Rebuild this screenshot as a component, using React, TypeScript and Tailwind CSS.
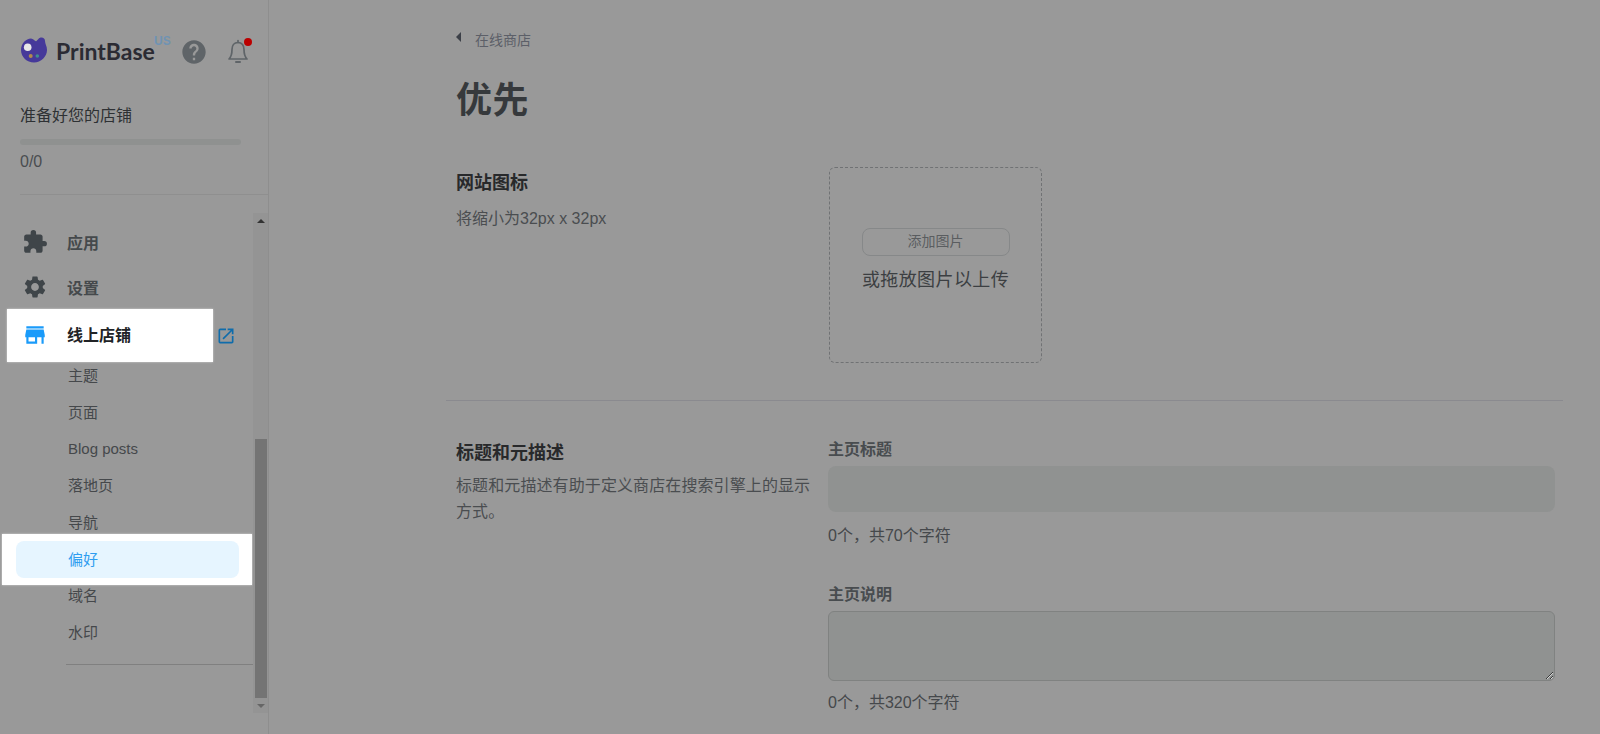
import React from "react";
import { MdExtension, MdSettings, MdStore, MdOpenInNew, MdHelp } from "react-icons/md";

function Logo() {
  return (
    <svg width="28" height="26" viewBox="0 0 28 26" className="shrink-0">
      <path d="M11 1.500C6 1.500 1 6.500 1 13C1 20 7 25.500 14 25.500C21 25.500 27 19.500 27 13C27 9 25 7 25 4C25 2 23.500 .5 21.500 .5C18.500 .5 18 3 16.500 4C15 5 13.500 1.500 11 1.500Z" fill="#46399a" />
      <circle cx="7.700" cy="10.300" r="3.800" fill="#e8e8e8" />
      <circle cx="10.700" cy="19" r="2" fill="#b08a4e" />
      <circle cx="17.300" cy="19" r="1.800" fill="#3f8f8f" />
    </svg>
  );
}

function BellIcon() {
  return (
    <svg width="22" height="26" viewBox="0 0 22 26" fill="none" stroke="#5f6468" strokeWidth="1.700" strokeLinecap="round" strokeLinejoin="round">
      <path d="M11 3.500C7 3.500 5 6.500 5 10.500C5 15 4.500 17.500 2 20H20C17.500 17.500 17 15 17 10.500C17 6.500 15 3.500 11 3.500Z" />
      <path d="M11 1.500V3.500" />
      <path d="M9 23H13" strokeWidth="2" />
    </svg>
  );
}

function SubItem({ children }: { children: React.ReactNode }) {
  return <div className="h-[36.700px] pl-[68px] flex items-center text-[15px] text-[#45484b]">{children}</div>;
}

function App() {
  return (
    <div className="flex h-[734px] w-[1600px] overflow-hidden bg-[#999999] font-['Liberation_Sans','Noto_Sans_CJK_SC',sans-serif] text-[#3a3d40]">
      <aside className="w-[269px] shrink-0 border-r border-[#8e8e8e] flex flex-col">
        <div className="h-[102px] pl-[20px] pt-[37px] flex items-start">
          <Logo />
          <span className="ml-[8px] w-[98px] text-[23px] leading-[28px] font-bold text-[#2b2b33] font-['Lato',sans-serif]">PrintBase</span>
          <span className="w-[18px] mt-[-3px] text-[12px] leading-[14px] font-bold text-[#6f93b3]">US</span>
          <MdHelp className="ml-[8px] mt-[1px] text-[#5f6468]" size={28} />
          <div className="relative ml-[19px] mt-[2px]">
            <BellIcon />
            <span className="absolute right-[-3px] top-[-1px] w-[8px] h-[8px] rounded-full bg-[#bb0000]" />
          </div>
        </div>
        <div className="mx-[20px] text-[16px] leading-[28px] text-[#2e3134]">准备好您的店铺</div>
        <div className="ml-[20px] mt-[9px] w-[221px] h-[6px] rounded-full bg-[#8f9190]" />
        <div className="ml-[20px] mt-[7px] text-[16px] leading-[20px] text-[#4a4d50]">0/0</div>
        <div className="ml-[20px] mt-[22px] border-t border-[#8f8f8f]" />
        <div className="mt-[18px] h-[500px] flex">
          <nav className="w-[253px] shrink-0 pt-[8px]">
            <div className="h-[45.500px] flex items-center pl-[22px] gap-[19px] text-[16px] font-bold text-[#45494c]">
              <MdExtension size={26} className="text-[#3f4549] mt-[-4px]" />
              <span>应用</span>
            </div>
            <div className="h-[45.500px] flex items-center pl-[22px] gap-[19px] text-[16px] font-bold text-[#45494c]">
              <MdSettings size={26} className="text-[#3f4549] mt-[-4px]" />
              <span>设置</span>
            </div>
            <div className="flex items-center h-[53px] mt-[-3px]">
              <div className="ml-[7px] w-[206px] h-[53px] bg-white shadow-[0_0_2px_0_rgba(255,255,255,0.6)] flex items-center pl-[15px] gap-[19px] text-[16px] font-bold text-[#212326]">
                <MdStore size={26} className="text-[#1a9bfa] mt-[-2px]" />
                <span>线上店铺</span>
              </div>
              <MdOpenInNew size={20} className="ml-[3px] text-[#0f6cab]" />
            </div>
            <div className="mt-[-4px]">
              <SubItem>主题</SubItem>
              <SubItem>页面</SubItem>
              <SubItem>Blog posts</SubItem>
              <SubItem>落地页</SubItem>
              <SubItem>导航</SubItem>
              <div className="h-[36.700px] flex items-center">
                <div className="shrink-0 ml-[2px] w-[250px] h-[51px] bg-white shadow-[0_0_2px_0_rgba(255,255,255,0.6)] flex items-center pl-[14px]">
                  <div className="w-[223px] h-[37px] rounded-[8px] bg-[#e6f5ff] pl-[52px] flex items-center text-[15px] text-[#2f9df0]">偏好</div>
                </div>
              </div>
              <SubItem>域名</SubItem>
              <SubItem>水印</SubItem>
            </div>
            <div className="ml-[66px] mt-[12px] border-t border-[#808080]" />
          </nav>
          <div className="w-[15px] h-[500px] bg-[#949494] flex flex-col items-center">
            <div className="h-[16px] flex items-center justify-center">
              <div className="w-0 h-0 border-x-[4px] border-x-transparent border-b-[4px] border-b-[#333333]" />
            </div>
            <div className="mt-[210px] w-[12px] h-[259px] bg-[#747474]" />
            <div className="h-[15px] flex items-center justify-center">
              <div className="w-0 h-0 border-x-[4px] border-x-transparent border-t-[4px] border-t-[#666666]" />
            </div>
          </div>
        </div>
      </aside>

      <main className="flex-1 pl-[177px] pr-[37px]">
        <div className="pl-[10px]">
          <div className="pt-[30px] flex items-center h-[50px] text-[14px] text-[#5c5f68]">
            <div className="w-0 h-0 mt-[-6px] border-y-[5px] border-y-transparent border-r-[5px] border-r-[#3c4048]" />
            <span className="ml-[14px]">在线商店</span>
          </div>
          <h1 className="mt-[29px] text-[36px] leading-[44px] font-bold text-[#36393c] tracking-[0.5px]">优先</h1>
          <div className="mt-[44px] flex">
            <div className="w-[373px] shrink-0 pt-[4px]">
              <h2 className="text-[18px] leading-[24px] font-bold text-[#28292b]">网站图标</h2>
              <p className="mt-[12px] text-[16px] leading-[24px] text-[#4a4d50]">将缩小为32px x 32px</p>
            </div>
            <div className="w-[213px] h-[196px] rounded-[6px] border border-dashed border-[#707274] flex flex-col items-center justify-center">
              <button className="w-[148px] h-[28px] rounded-[8px] border border-[#868889] text-[14px] text-[#5a5d60] mt-[-9px]">添加图片</button>
              <div className="mt-[10px] text-[18px] leading-[28px] tracking-[0.4px] text-[#3c3f42]">或拖放图片以上传</div>
            </div>
          </div>
        </div>
        <div className="mt-[37px] border-t border-[#8a8a8f]" />
        <div className="pl-[10px] mt-[37px] flex">
          <div className="w-[372px] shrink-0 pr-[9px] pt-[3px]">
            <h2 className="text-[18px] leading-[24px] font-bold text-[#28292b]">标题和元描述</h2>
            <p className="mt-[8px] text-[16px] leading-[26px] text-[#4a4d50] tracking-[0.1px]">标题和元描述有助于定义商店在搜索引擎上的显示方式。</p>
          </div>
          <div className="flex-1 pr-[8px]">
            <div className="text-[16px] leading-[24px] font-bold text-[#484c4f]">主页标题</div>
            <input className="mt-[4px] block w-full h-[46px] rounded-[8px] bg-[#909291] outline-none" />
            <div className="mt-[12px] text-[16px] leading-[24px] text-[#45484b]">0个，共70个字符</div>
            <div className="mt-[35px] text-[16px] leading-[24px] font-bold text-[#484c4f]">主页说明</div>
            <textarea className="mt-[4px] block w-full h-[70px] rounded-[6px] bg-[#909291] border border-[#808281] outline-none" />
            <div className="mt-[10px] text-[16px] leading-[24px] text-[#45484b]">0个，共320个字符</div>
          </div>
        </div>
      </main>
    </div>
  );
}

export default App;
